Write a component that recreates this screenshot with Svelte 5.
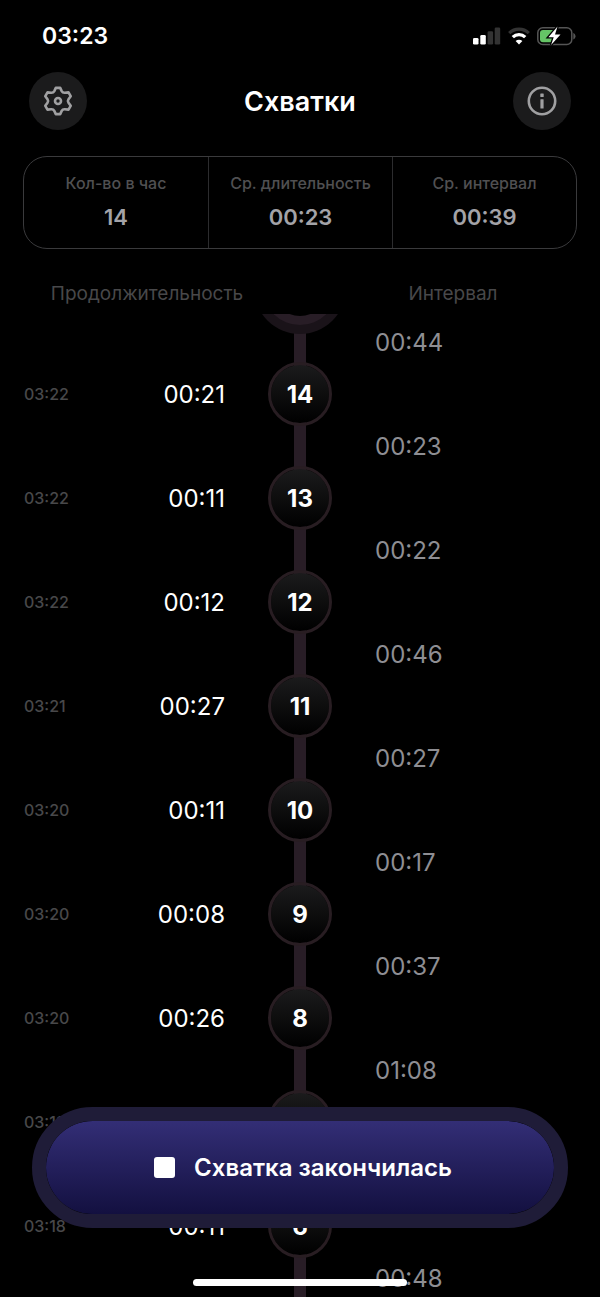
<script>
  const stats = [
    { label: 'Кол-во в час', value: '14' },
    { label: 'Ср. длительность', value: '00:23' },
    { label: 'Ср. интервал', value: '00:39' }
  ];

  let contractions = $state([
    { number: 14, time: '03:22', duration: '00:21', interval: '00:44' },
    { number: 13, time: '03:22', duration: '00:11', interval: '00:23' },
    { number: 12, time: '03:22', duration: '00:12', interval: '00:22' },
    { number: 11, time: '03:21', duration: '00:27', interval: '00:46' },
    { number: 10, time: '03:20', duration: '00:11', interval: '00:27' },
    { number: 9, time: '03:20', duration: '00:08', interval: '00:17' },
    { number: 8, time: '03:20', duration: '00:26', interval: '00:37' },
    { number: 7, time: '03:19', interval: '01:08' },
    { number: 6, time: '03:18', duration: '00:11' },
    { number: 5, interval: '00:48' }
  ]);
</script>

<div class="app">
  <div class="status-bar">
    <span class="clock">03:23</span>
    <div class="indicators">
      <svg width="28" height="18" viewBox="0 0 28 18" aria-hidden="true">
        <rect x="0" y="11" width="5.5" height="6.5" rx="1.3" fill="#fff" />
        <rect x="7.3" y="8" width="5.5" height="9.5" rx="1.3" fill="#fff" />
        <rect x="14.6" y="4.3" width="5.5" height="13.2" rx="1.3" fill="#333" />
        <rect x="21.7" y="0.5" width="5.5" height="17" rx="1.3" fill="#333" />
      </svg>
      <svg width="24" height="18" viewBox="0 0 24 18" aria-hidden="true">
        <path d="M2.2 6.2a14 14 0 0 1 19.6 0" fill="none" stroke="#333" stroke-width="3.2" />
        <path d="M5.8 10.2a8.8 8.8 0 0 1 12.4 0" fill="none" stroke="#fff" stroke-width="3.3" />
        <path d="M12 17.6 8.6 14.1a4.9 4.9 0 0 1 6.8 0z" fill="#fff" />
      </svg>
      <svg width="39" height="20" viewBox="0 0 39 20" aria-hidden="true">
        <rect x="0.8" y="1.8" width="34" height="16.6" rx="5" fill="none" stroke="#555" stroke-width="1.5" />
        <path d="M36.3 7v6.4c1.3-.5 2.2-1.7 2.2-3.2s-.9-2.7-2.2-3.2z" fill="#555" />
        <rect x="3" y="4" width="15" height="12.2" rx="3" fill="#65c466" />
        <path
          d="M20.5.6 11.4 11.2h5.3l-2.6 7.8 9.4-10.6h-5.5z"
          fill="#fff"
          stroke="#000"
          stroke-width="2.6"
          paint-order="stroke"
        />
      </svg>
    </div>
  </div>

  <header class="header">
    <button class="round-button" aria-label="Настройки">
      <svg width="30" height="30" viewBox="0 0 30 30" fill="none" stroke="#a0a0a2" stroke-width="2.6" stroke-linejoin="round">
        <path
          d="M12.8 1.9h4.4l1.5 3.2c.6 1.2 1.8 1.8 3.1 1.7l3.7-.4 2.2 3.8-2.2 3c-.7 1-.7 2.6 0 3.6l2.2 3-2.2 3.8-3.7-.4c-1.3-.1-2.5.5-3.1 1.7l-1.5 3.2h-4.4l-1.5-3.2c-.6-1.2-1.8-1.8-3.1-1.7l-3.7.4-2.2-3.8 2.2-3c.7-1 .7-2.6 0-3.6l-2.2-3 2.2-3.8 3.7.4c1.3.1 2.5-.5 3.1-1.7z"
        />
        <circle cx="15" cy="15" r="3" />
      </svg>
    </button>
    <h1>Схватки</h1>
    <button class="round-button" aria-label="Информация">
      <svg width="30" height="30" viewBox="0 0 30 30">
        <circle cx="15" cy="15" r="13.2" fill="none" stroke="#a0a0a2" stroke-width="2.6" />
        <rect x="13.3" y="7.6" width="3.4" height="3.4" rx="0.5" fill="#a0a0a2" />
        <rect x="13.4" y="13.2" width="3.2" height="9.2" rx="0.5" fill="#a0a0a2" />
      </svg>
    </button>
  </header>

  <dl class="stats">
    {#each stats as stat (stat.label)}
      <div class="stat">
        <dt>{stat.label}</dt>
        <dd>{stat.value}</dd>
      </div>
    {/each}
  </dl>

  <div class="columns">
    <span>Продолжительность</span>
    <span>Интервал</span>
  </div>

  <main class="timeline">
    <ol class="list">
      {#each contractions as item (item.number)}
        <li class="row">
          {#if item.interval}
            <span class="interval">{item.interval}</span>
          {/if}
          {#if item.time}
            <div class="record">
              <time>{item.time}</time>
              <span class="duration">{item.duration ?? ''}</span>
            </div>
            <span class="node">{item.number}</span>
          {/if}
        </li>
      {/each}
    </ol>
  </main>

  <div class="footer">
    <button class="stop-button">
      <span class="stop-icon"></span>
      Схватка закончилась
    </button>
    <div class="home-indicator"></div>
  </div>
</div>

<style>
  :global(body) {
    margin: 0;
    background: #000;
  }

  .app {
    position: relative;
    display: flex;
    flex-direction: column;
    height: 100vh;
    overflow: hidden;
    background: #000;
    color: #fff;
    font-family: Inter, 'Liberation Sans', sans-serif;
  }

  button {
    border: 0;
    padding: 0;
    font-family: inherit;
    color: inherit;
    cursor: pointer;
  }

  .status-bar {
    display: flex;
    justify-content: space-between;
    align-items: center;
    height: 72px;
    padding: 0 24px 0 42px;
  }
  .clock {
    font-size: 23px;
    font-weight: 600;
  }
  .indicators {
    display: flex;
    align-items: center;
    gap: 6px;
  }

  .header {
    display: flex;
    justify-content: space-between;
    align-items: center;
    padding: 0 29px;
  }
  h1 {
    margin: 0;
    font-size: 27px;
    font-weight: 600;
  }
  .round-button {
    display: grid;
    place-items: center;
    width: 58px;
    height: 58px;
    border-radius: 50%;
    background: #1b1b1c;
  }

  .stats {
    display: grid;
    grid-template-columns: repeat(3, 1fr);
    margin: 26px 23px 0;
    border: 1px solid #3a3a3c;
    border-radius: 24px;
  }
  .stat {
    display: flex;
    flex-direction: column;
    align-items: center;
    gap: 10px;
    padding: 16px 0 17px;
  }
  .stat + .stat {
    border-left: 1px solid #2c2c2e;
  }
  dt {
    color: #505052;
    font-size: 16px;
    font-weight: 500;
    line-height: 20px;
  }
  dd {
    margin: 0;
    color: #a3a3a8;
    font-size: 22px;
    font-weight: 600;
    line-height: 28px;
  }

  .columns {
    display: grid;
    grid-template-columns: 1fr 1fr;
    column-gap: 60px;
    padding: 33px 24px 8px;
    color: #48484a;
    font-size: 19px;
    line-height: 24px;
    text-align: center;
  }

  .timeline {
    flex: 1;
    min-height: 0;
    overflow-y: auto;
    scrollbar-width: none;
  }
  .list {
    position: relative;
    margin: 0;
    padding: 2px 0 0;
    list-style: none;
    background: linear-gradient(#281d26, #281d26) center / 12px 100% no-repeat;
  }
  /* lower edge of the running contraction, scrolled out of view */
  .list::before {
    content: '';
    position: absolute;
    top: -54px;
    left: calc(50% - 28px);
    width: 56px;
    height: 56px;
    border-radius: 50%;
    background: #000;
    box-shadow:
      0 0 0 9px #281d26,
      0 0 0 18px #1a1319;
  }

  .row {
    display: grid;
    grid-template-columns: 1fr 150px 1fr;
    grid-template-rows: 52px 52px;
    align-items: center;
    padding: 0 24px;
  }
  .interval {
    grid-area: 1 / 3;
    color: #8e8e93;
    font-size: 24px;
  }
  .record {
    grid-area: 2 / 1;
    display: flex;
    justify-content: space-between;
    align-items: center;
  }
  time {
    color: #48484a;
    font-size: 16px;
    font-weight: 500;
  }
  .duration {
    font-size: 24px;
  }
  .node {
    grid-area: 2 / 2;
    justify-self: center;
    display: grid;
    place-items: center;
    box-sizing: border-box;
    width: 64px;
    height: 64px;
    border: 3px solid #281d22;
    border-radius: 50%;
    background: linear-gradient(#1b1b1c, #000) padding-box;
    font-size: 24px;
    font-weight: 700;
  }

  .footer {
    position: absolute;
    right: 0;
    bottom: 0;
    left: 0;
    display: flex;
    flex-direction: column;
    align-items: center;
    gap: 51px;
    padding: 0 32px 11px;
  }
  .stop-button {
    display: flex;
    justify-content: center;
    align-items: center;
    gap: 19px;
    width: 100%;
    height: 121px;
    padding-left: 6px;
    border: 14px solid #1f1c38;
    border-radius: 61px;
    background: linear-gradient(#332e76, #131040) padding-box;
    font-size: 24px;
    font-weight: 600;
  }
  .stop-icon {
    width: 21px;
    height: 21px;
    border-radius: 3px;
    background: #fff;
  }
  .home-indicator {
    width: 214px;
    height: 7px;
    border-radius: 4px;
    background: #fff;
  }
</style>
